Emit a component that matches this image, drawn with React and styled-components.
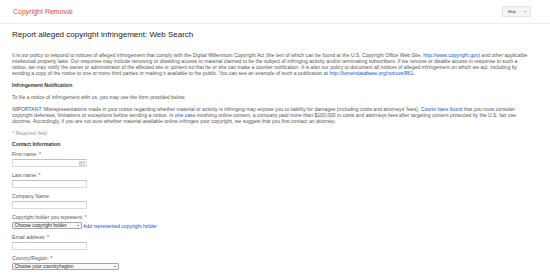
import React from 'react'
import styled, { createGlobalStyle } from 'styled-components'

const Global = createGlobalStyle`
  html, body {
    margin: 0;
    padding: 0;
    background: #fff;
  }
  body {
    font-family: Arial, "Liberation Sans", sans-serif;
    color: #555;
  }
`

const Header = styled.header`
  height: 24px;
  box-sizing: border-box;
  border-bottom: 1px solid #ebebeb;
  display: flex;
  align-items: center;
  justify-content: space-between;
  padding: 0 19px 0 13px;
`

const Brand = styled.div`
  font-size: 7px;
  color: #dd4b39;
`

const HelpButton = styled.button`
  width: 29px;
  height: 11px;
  box-sizing: border-box;
  border: 1px solid #e4e4e4;
  border-radius: 1px;
  background: #f5f5f5;
  color: #666;
  font-family: inherit;
  font-size: 3.6px;
  font-weight: bold;
  display: flex;
  align-items: center;
  justify-content: space-between;
  padding: 0 4px 0 5px;
`

const Caret = styled.span`
  width: 0;
  height: 0;
  border-left: 1.2px solid transparent;
  border-right: 1.2px solid transparent;
  border-top: 1.5px solid #777;
`

const Main = styled.main`
  padding: 6px 14px 0 12px;
`

const Title = styled.h1`
  margin: 0 0 12px;
  font-size: 8px;
  line-height: 10px;
  font-weight: normal;
  color: #222;
`

const Para = styled.p`
  margin: 0 0 ${p => p.$gap ?? 6}px;
  font-size: 5.1px;
  line-height: 6px;
`

const Subhead = styled(Para)`
  font-weight: bold;
  color: #333;
`

const Note = styled(Para)`
  font-style: italic;
  color: #999;
`

const Link = styled.a`
  color: #15c;
  text-decoration: none;
`

const Field = styled.div`
  display: flex;
  flex-direction: column;
  gap: 2px;
  margin-bottom: 5px;
`

const Label = styled.label`
  font-size: 5.1px;
  line-height: 6px;
`

const InputWrap = styled.div`
  position: relative;
  width: 75px;
`

const Input = styled.input`
  display: block;
  width: 75px;
  height: 8px;
  box-sizing: border-box;
  border: 1px solid #d9d9d9;
  border-top-color: #c0c0c0;
  padding: 0 2px;
  margin: 0;
  font-size: 4px;
  outline: none;
`

const CardIcon = styled.svg`
  position: absolute;
  right: 2px;
  top: 1.5px;
  width: 6px;
  height: 5px;
`

const SelectRow = styled.div`
  display: flex;
  align-items: center;
  gap: 1px;
`

const Select = styled.div`
  width: ${p => p.$width}px;
  height: 7px;
  box-sizing: border-box;
  border: 1px solid #a6a6a6;
  border-radius: 1px;
  background: #f8f8f8;
  font-size: 4.8px;
  line-height: 5px;
  color: #222;
  display: flex;
  align-items: center;
  justify-content: space-between;
  padding: 0 2px 0 1.5px;
`

const SmallCaret = styled.span`
  width: 0;
  height: 0;
  border-left: 1px solid transparent;
  border-right: 1px solid transparent;
  border-top: 1.3px solid #222;
`

const AddLink = styled(Link)`
  font-size: 5px;
  line-height: 6px;
`

export default function App() {
  return (
    <>
      <Global />
      <Header>
        <Brand>Copyright Removal</Brand>
        <HelpButton>
          Help
          <Caret />
        </HelpButton>
      </Header>
      <Main>
        <Title>Report alleged copyright infringement: Web Search</Title>
        <Para>
          It is our policy to respond to notices of alleged infringement that comply with the Digital Millennium
          Copyright Act (the text of which can be found at the U.S. Copyright Office Web Site,{' '}
          <Link href="#">http://www.copyright.gov</Link>) and other applicable intellectual property laws. Our
          response may include removing or disabling access to material claimed to be the subject of infringing
          activity and/or terminating subscribers. If we remove or disable access in response to such a
          <br />
          notice, we may notify the owner or administrator of the affected site or content so that he or she can make
          a counter notification. It is also our policy to document all notices of alleged infringement on which we
          act, including by
          <br />
          sending a copy of the notice to one or more third parties or making it available to the public. You can see
          an example of such a publication at <Link href="#">http://lumendatabase.org/notices/861</Link>.
        </Para>
        <Subhead>Infringement Notification</Subhead>
        <Para>To file a notice of infringement with us, you may use the form provided below.</Para>
        <Para>
          IMPORTANT: Misrepresentations made in your notice regarding whether material or activity is infringing may
          expose you to liability for damages (including costs and attorneys' fees).{' '}
          <Link href="#">Courts have found</Link> that you must consider copyright defenses, limitations or
          exceptions before sending a notice. In <Link href="#">one case</Link> involving online content, a company
          paid more than $100,000 in costs and attorneys fees after targeting content protected by the U.S. fair use
          doctrine. Accordingly, if you are not sure whether material available online infringes your copyright, we
          suggest that you first contact an attorney.
        </Para>
        <Note $gap={5}>* Required field</Note>
        <Subhead $gap={4}>Contact Information</Subhead>
        <Field>
          <Label>First name: *</Label>
          <InputWrap>
            <Input />
            <CardIcon viewBox="0 0 12 10">
              <rect x="0.5" y="0.5" width="11" height="9" rx="1" fill="none" stroke="#888" strokeWidth="1" />
              <circle cx="4" cy="4" r="1.5" fill="#888" />
              <path d="M1.8 8 Q4 5.5 6.2 8 Z" fill="#888" />
              <path d="M7.5 3.5 H10 M7.5 5.5 H10" stroke="#888" strokeWidth="1" />
            </CardIcon>
          </InputWrap>
        </Field>
        <Field>
          <Label>Last name: *</Label>
          <Input />
        </Field>
        <Field>
          <Label>Company Name:</Label>
          <Input />
        </Field>
        <Field>
          <Label>Copyright holder you represent: *</Label>
          <SelectRow>
            <Select $width={70}>
              Choose copyright holder
              <SmallCaret />
            </Select>
            <AddLink href="#">Add represented copyright holder</AddLink>
          </SelectRow>
        </Field>
        <Field>
          <Label>Email address: *</Label>
          <Input />
        </Field>
        <Field>
          <Label>Country/Region: *</Label>
          <Select $width={107}>
            Choose your country/region
            <SmallCaret />
          </Select>
        </Field>
      </Main>
    </>
  )
}
